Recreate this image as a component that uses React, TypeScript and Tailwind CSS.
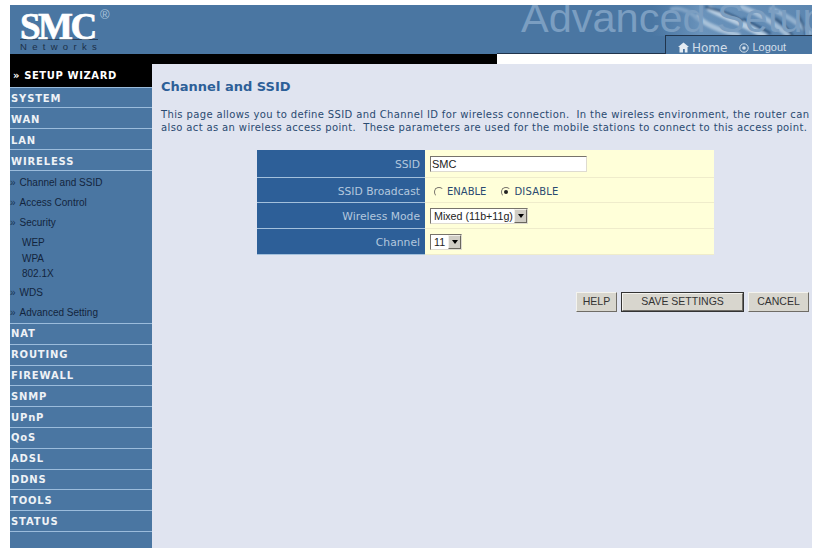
import React from "react";

const verdana = "font-['DejaVu_Sans',sans-serif]";
const arial = "font-['Liberation_Sans',Arial,sans-serif]";
const navText = "text-[10px] font-bold tracking-[0.85px] text-[#eef2f6]";

function NavHead({ label, h = "h-[20.8px]", pt = "pt-0" }: { label: string; h?: string; pt?: string }) {
  return (
    <div className={`${h} ${pt} border-b border-[#9bbcdc] pl-px flex items-center ${navText} ${verdana}`}>
      {label}
    </div>
  );
}

function Sub({ label, cls }: { label: string; cls: string }) {
  return (
    <div className={`flex items-center text-[10px] text-[#13253d] ${arial} ${cls}`}>
      <span className="text-[#1a3553] mr-[4.5px] tracking-[-0.5px]">»</span>
      {label}
    </div>
  );
}

function Third({ label }: { label: string }) {
  return <div className={`h-[15.5px] pl-[12px] flex items-center text-[10px] text-[#13253d] ${arial}`}>{label}</div>;
}

function Row({ label, h, children }: { label: string; h: string; children: React.ReactNode }) {
  return (
    <div className={`flex ${h}`}>
      <div className={`w-[168px] bg-[#2d5f98] border-b border-[#a3c0dc] flex items-center justify-end pr-[5px] pt-[4px] text-[10.75px] text-[#b4c8de] ${verdana}`}>{label}</div>
      <div className="flex-1 bg-[#ffffd9] border-b border-[#efeccb] flex items-center pl-[5px] pt-[1px]">{children}</div>
    </div>
  );
}

function Radio({ on }: { on?: boolean }) {
  return (
    <span className="w-[10px] h-[10px] rounded-full border border-t-[#77736b] border-l-[#77736b] border-r-transparent border-b-transparent flex items-center justify-center">
      {on && <span className="w-[4px] h-[4px] rounded-full bg-[#222]" />}
    </span>
  );
}

function Arrow() {
  return (
    <span className="w-[13px] h-[14px] bg-[#d0cdc5] border border-t-[#f2f0ea] border-l-[#f2f0ea] border-r-[#6a675f] border-b-[#6a675f] flex items-center justify-center">
      <span className="w-0 h-0 border-x-[3px] border-x-transparent border-t-[4px] border-t-black" />
    </span>
  );
}

function Select({ text, w }: { text: string; w: string }) {
  return (
    <div className={`${w} h-[16px] bg-white border border-t-[#77736b] border-l-[#77736b] border-r-[#dedbd0] border-b-[#dedbd0] flex items-center justify-between pl-[3px] text-[10.7px] text-[#222] whitespace-nowrap ${arial}`}>
      <span>{text}</span>
      <Arrow />
    </div>
  );
}

function Btn({ label, cls }: { label: string; cls: string }) {
  return (
    <div className={`bg-[#d8d6ce] flex items-center justify-center text-[10.5px] text-[#333] border border-t-[#f4f3ee] border-l-[#f4f3ee] border-r-[#6f6c66] border-b-[#6f6c66] ${arial} ${cls}`}>
      {label}
    </div>
  );
}

export default function App() {
  return (
    <div className="w-[815px] h-[553px] bg-white pt-[5px] pl-[10px] pr-[3px] pb-[5px] overflow-hidden flex flex-col">
      {/* banner */}
      <div className="relative h-[49px] bg-[#4a76a2] overflow-hidden shrink-0">
        <div className="pl-[10px] w-[90px]">
          <div className="relative h-[34px] flex items-end">
            <span className="font-['Liberation_Serif',serif] font-bold text-[37px] leading-[24px] tracking-[-2.5px] text-white [-webkit-text-stroke:0.7px_white]">SMC</span>
            <span className={`absolute left-[80px] top-[3px] text-[13px] leading-none text-[#a9c2da] ${arial}`}>®</span>
          </div>
          <div className="w-[78px] border-t border-[#27405c] h-0" />
          <div className={`text-[9.5px] leading-[10px] tracking-[5.3px] text-[#1c3048] whitespace-nowrap mt-[2px] ${arial}`}>Networks</div>
        </div>
        <svg className="absolute right-0 top-0" width="160" height="31" viewBox="0 0 160 31">
          <defs>
            <linearGradient id="base" x1="0" x2="1" y1="0" y2="0">
              <stop offset="0" stopColor="#5f8ab5" stopOpacity="0" />
              <stop offset="0.3" stopColor="#6a93bb" stopOpacity="1" />
              <stop offset="1" stopColor="#5c86b0" stopOpacity="1" />
            </linearGradient>
            <filter id="soft"><feGaussianBlur stdDeviation="0.9" /></filter>
          </defs>
          <rect width="160" height="31" fill="url(#base)" />
          <g filter="url(#soft)" fill="none" strokeLinecap="round">
            <path d="M58 4 C72 12 92 18 112 31" stroke="#b7cde2" strokeWidth="6" />
            <path d="M46 12 C56 22 72 26 86 30" stroke="#a9c2da" strokeWidth="5" />
            <path d="M90 2 C106 8 122 18 136 30" stroke="#a3bdd7" strokeWidth="5" />
            <path d="M120 4 C134 10 146 18 158 28" stroke="#93b1cf" strokeWidth="5" />
            <path d="M54 2 C68 6 78 8 90 16" stroke="#2f5680" strokeWidth="2.5" />
            <path d="M92 14 C104 20 110 24 118 28" stroke="#2f5680" strokeWidth="2.5" />
            <path d="M124 14 C132 20 136 24 140 30" stroke="#34597f" strokeWidth="2.5" />
            <path d="M146 10 C150 16 152 22 154 30" stroke="#34597f" strokeWidth="2" />
            <path d="M20 4 C30 2 40 8 46 14" stroke="#82a4c6" strokeWidth="4" />
          </g>
        </svg>
        <div className={`absolute left-[511px] top-[-11px] text-[41.5px] leading-[48px] text-[#7b9ec1] whitespace-nowrap ${arial}`}>Advanced Setup</div>
        <div className="absolute left-[487px] right-[147px] bottom-0 h-[4px] border-b border-[#20344c]" />
        <div className={`absolute right-0 top-[30px] w-[147px] h-[19px] bg-[#4a76a2] border-t border-l border-[#20344c] flex items-center pl-[12px] pt-[5px] gap-[12px] text-[12px] text-[#d3dfea] ${verdana}`}>
          <span className="flex items-center gap-[3px]">
            <svg width="11" height="11" viewBox="0 0 11 11">
              <path d="M0 5 L5.5 0.5 L11 5 L9.5 5 L9.5 10.5 L6.8 10.5 L6.8 7 L5 7 L5 10.5 L1.5 10.5 L1.5 5 Z" fill="#e4ecf3" />
            </svg>
            Home
          </span>
          <span className={`flex items-center gap-[3px] text-[11px] ${arial}`}>
            <svg width="10" height="10" viewBox="0 0 10 10">
              <circle cx="5" cy="5" r="4.2" fill="none" stroke="#d3dfea" />
              <circle cx="5" cy="5" r="1.8" fill="#d3dfea" />
            </svg>
            Logout
          </span>
        </div>
      </div>
      {/* strip */}
      <div className="flex h-[10px] shrink-0">
        <div className="w-[487px] bg-black" />
        <div className="flex-1 bg-white" />
      </div>
      {/* body */}
      <div className="flex flex-1 min-h-0">
        <div className="w-[142px] bg-[#4a76a2] flex flex-col shrink-0">
          <div className={`h-[24px] bg-black border-b border-[#9bbcdc] pl-[3px] flex items-center text-[10px] font-bold tracking-[0.6px] text-white ${verdana}`}>
            » SETUP WIZARD
          </div>
          <NavHead label="SYSTEM" h="h-[20px]" pt="pt-[1px]" />
          <NavHead label="WAN" h="h-[21px]" pt="pt-[3px]" />
          <NavHead label="LAN" h="h-[21px]" pt="pt-[3px]" />
          <NavHead label="WIRELESS" h="h-[21px]" pt="pt-[3px]" />
          <Sub label="Channel and SSID" cls="h-[22px]" />
          <Sub label="Access Control" cls="h-[19px]" />
          <Sub label="Security" cls="h-[20px]" />
          <div className="pt-[3px] pb-[0.5px]">
            <Third label="WEP" />
            <Third label="WPA" />
            <Third label="802.1X" />
          </div>
          <Sub label="WDS" cls="h-[20px]" />
          <div className="h-[22px] border-b border-[#9bbcdc]">
            <Sub label="Advanced Setting" cls="h-full" />
          </div>
          <NavHead label="NAT" />
          <NavHead label="ROUTING" />
          <NavHead label="FIREWALL" />
          <NavHead label="SNMP" />
          <NavHead label="UPnP" />
          <NavHead label="QoS" />
          <NavHead label="ADSL" />
          <NavHead label="DDNS" />
          <NavHead label="TOOLS" />
          <NavHead label="STATUS" />
        </div>
        <div className="flex-1 bg-[#e0e4f0] pl-[9px] pr-[1px] flex flex-col">
          <h1 className={`mt-[14px] text-[13px] leading-[18px] font-bold text-[#2d5f98] ${verdana}`}>Channel and SSID</h1>
          <p className={`mt-[12px] text-[10px] leading-[13px] tracking-[0.37px] text-[#2a4a70] whitespace-nowrap ${verdana}`}>
            This page allows you to define SSID and Channel ID for wireless connection.&nbsp; In the wireless environment, the router can
            <br />
            also act as an wireless access point.&nbsp; These parameters are used for the mobile stations to connect to this access point.
          </p>
          <div className="mt-[16px] ml-[96px] w-[457px] flex flex-col">
            <Row label="SSID" h="h-[28px]">
              <div className={`w-[157px] h-[16px] bg-white border border-t-[#77736b] border-l-[#77736b] border-r-[#dedbd0] border-b-[#dedbd0] pl-px flex items-center text-[11px] text-[#222] ${arial}`}>SMC</div>
            </Row>
            <Row label="SSID Broadcast" h="h-[25px]">
              <div className={`flex items-center pl-[4px] pt-[2px] text-[10px] text-[#2a4a70] ${verdana}`}>
                <Radio />
                <span className="ml-[3px]">ENABLE</span>
                <span className="ml-[15px]"><Radio on /></span>
                <span className="ml-[3px] tracking-[0.2px]">DISABLE</span>
              </div>
            </Row>
            <Row label="Wireless Mode" h="h-[26px]">
              <Select text="Mixed (11b+11g)" w="w-[98px]" />
            </Row>
            <Row label="Channel" h="h-[26px]">
              <Select text="11" w="w-[32px]" />
            </Row>
          </div>
          <div className="mt-[37px] flex justify-end gap-[4px] pr-[2px]">
            <Btn label="HELP" cls="w-[41px] h-[20px]" />
            <div className="border border-[#333] flex">
              <Btn label="SAVE SETTINGS" cls="w-[121px] h-[18px]" />
            </div>
            <Btn label="CANCEL" cls="w-[61px] h-[20px]" />
          </div>
        </div>
      </div>
    </div>
  );
}
